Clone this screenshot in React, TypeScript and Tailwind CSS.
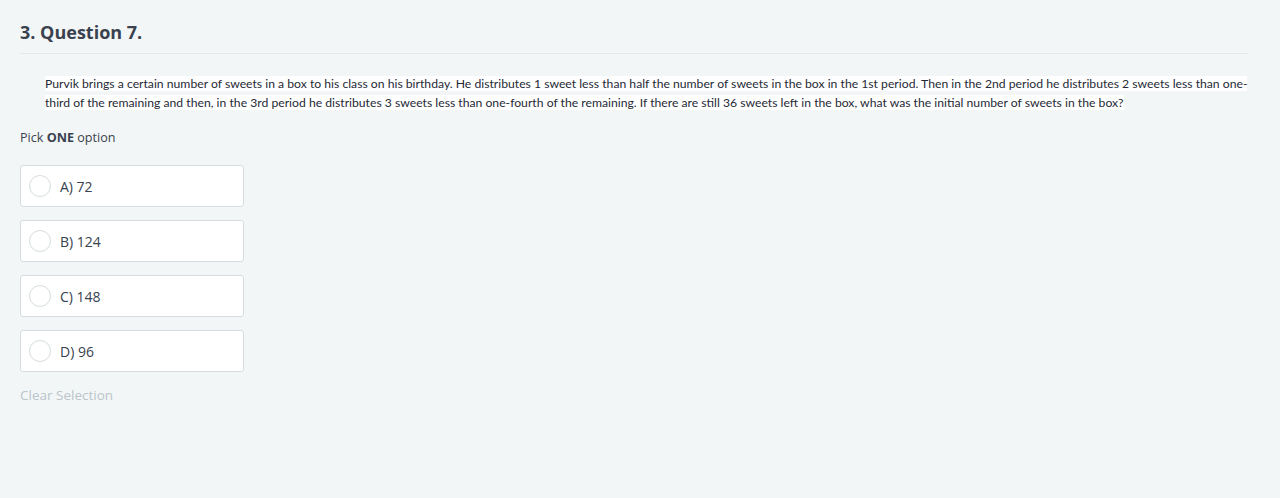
import React from "react";

const options = ["A) 72", "B) 124", "C) 148", "D) 96"];

export default function App() {
  return (
    <div className="min-h-[498px] w-full bg-[#f3f6f7] px-5 pt-[19px]" style={{ fontFamily: '"Open Sans", sans-serif' }}>
      <h1 className="text-[18px] font-bold leading-[26px] text-[#39424e]">3. Question 7.</h1>
      <div className="mt-[8px] h-px w-[1228px] bg-[#e3e8eb]" />
      <div className="mt-[20px] w-[1228px] pl-[25px] text-[12.2px] leading-[19px] text-[#1f2a36]" style={{ fontFamily: 'Lato, sans-serif' }}>
        <span className="bg-white">
          Purvik brings a certain number of sweets in a box to his class on his birthday. He distributes 1 sweet less than half the number of sweets in the box in the 1st period. Then in the 2nd period he distributes 2 sweets less than one-third of the remaining and then, in the 3rd period he distributes 3 sweets less than one-fourth of the remaining. If there are still 36 sweets left in the box, what was the initial number of sweets in the box?
        </span>
      </div>
      <p className="mt-[16px] text-[12.6px] leading-[20px] text-[#39424e]">
        Pick <span className="font-bold">ONE</span> option
      </p>
      <div className="mt-[17px] flex flex-col gap-[13px]">
        {options.map((o) => (
          <div key={o} className="flex h-[42px] w-[224px] items-center rounded-[3px] border border-[#d5dde0] bg-white pl-[8px]">
            <span className="h-[22px] w-[22px] rounded-full border border-[#d5dde0] bg-white" />
            <span className="ml-[9px] text-[14px] text-[#39424e]">{o}</span>
          </div>
        ))}
      </div>
      <p className="mt-[13px] text-[13.5px] leading-[20px] text-[#b9c5cb]">Clear Selection</p>
    </div>
  );
}
